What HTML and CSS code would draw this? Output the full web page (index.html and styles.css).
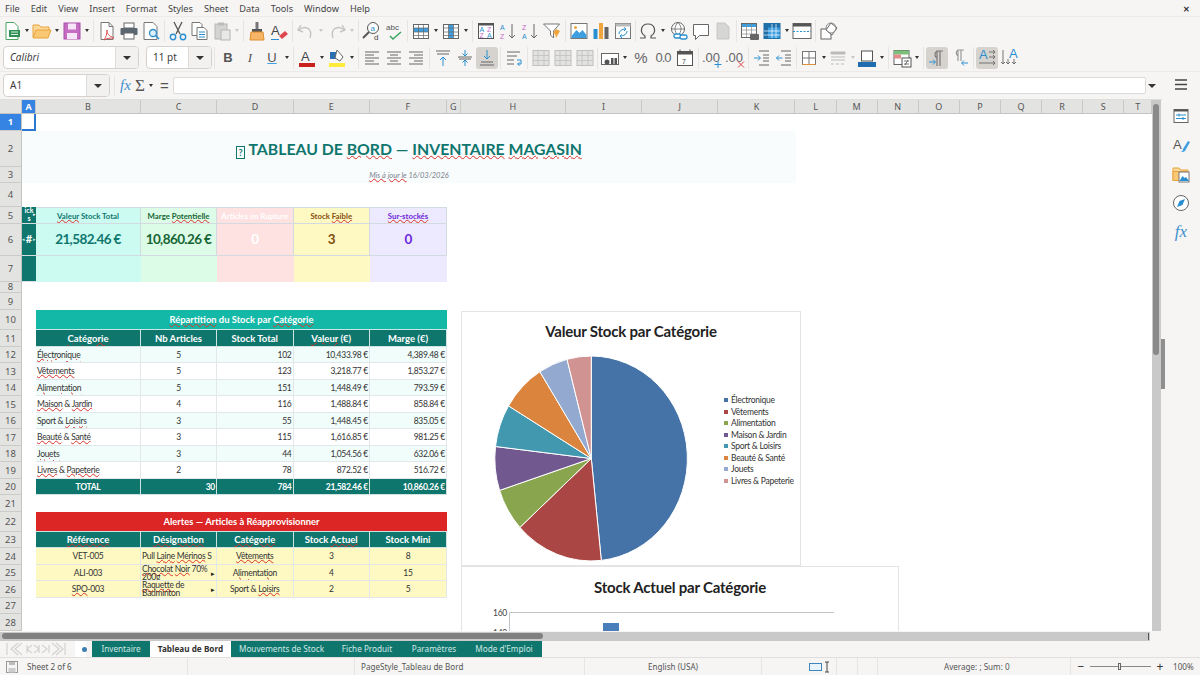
FILE: index.html
```html
<!DOCTYPE html>
<html lang="en">
<head>
    <meta charset="UTF-8">
    <title>Tableau de Bord - LibreOffice Calc</title>
    <link rel="stylesheet" href="styles.css">
</head>
<body>
<div class="app">
    <div class="menubar">
        <span>File</span><span>Edit</span><span>View</span><span>Insert</span><span>Format</span><span>Styles</span><span>Sheet</span><span>Data</span><span>Tools</span><span>Window</span><span>Help</span>
        <span class="close">&#10005;</span>
    </div>

    <!-- standard toolbar -->
    <div class="toolbar">
        <i class="btn"><svg viewBox="0 0 22 22"><path d="M5 2.5h8l4 4v13H5z" fill="#fff" stroke="#4aa564"/><rect x="8" y="10" width="11" height="7" fill="#2f8f55"/><path d="M10 12h7M10 14.5h7" stroke="#d8f0df"/></svg></i><i class="drop"></i>
        <i class="btn"><svg viewBox="0 0 22 22"><path d="M2 17V5h6l2 2h8v3" fill="#fbd898" stroke="#e8a33d"/><path d="M2 18l3-8h15l-3 8z" fill="#f9c874" stroke="#e8a33d"/></svg></i><i class="drop"></i>
        <i class="btn"><svg viewBox="0 0 22 22"><rect x="3" y="3" width="16" height="16" fill="#c46cc4" stroke="#a94fa9"/><rect x="7" y="3.5" width="8" height="6" fill="#f7e6f7"/><rect x="6" y="13" width="10" height="6" fill="#f7e6f7"/></svg></i><i class="drop"></i>
        <i class="sep"></i>
        <i class="btn"><svg viewBox="0 0 22 22"><path d="M5 2.5h8l4 4v13H5z" fill="#fff" stroke="#777"/><path d="M13 2.5v4h4" fill="none" stroke="#777"/><path d="M11 10c0 4 2 6 7 8-3 0-7 0-10 2 2-3 3-6 3-10z" fill="none" stroke="#d9534f"/></svg></i>
        <i class="btn"><svg viewBox="0 0 22 22"><rect x="6" y="3" width="10" height="5" fill="#fff" stroke="#666"/><rect x="2.5" y="8" width="17" height="7" rx="1" fill="#5b6770"/><rect x="6" y="13" width="10" height="6" fill="#fff" stroke="#666"/></svg></i>
        <i class="btn"><svg viewBox="0 0 22 22"><path d="M4 2.5h9l4 4v13H4z" fill="#fff" stroke="#777"/><circle cx="13" cy="13" r="3.5" fill="#dff0fa" stroke="#2a8fd0" stroke-width="1.3"/><path d="M15.5 15.5L19 19" stroke="#2a8fd0" stroke-width="1.6"/></svg></i>
        <i class="sep"></i>
        <i class="btn"><svg viewBox="0 0 22 22"><path d="M7 2l6 12M15 2L9 14" stroke="#555" stroke-width="1.3"/><circle cx="6" cy="17" r="2.7" fill="none" stroke="#2a8fd0" stroke-width="1.4"/><circle cx="16" cy="17" r="2.7" fill="none" stroke="#2a8fd0" stroke-width="1.4"/></svg></i>
        <i class="btn"><svg viewBox="0 0 22 22"><path d="M3 2.5h8l2 2v11H3z" fill="#fff" stroke="#777"/><path d="M8 7.5h7l3 3v9H8z" fill="#fff" stroke="#777"/><path d="M10 12h6M10 14.5h6M10 17h6" stroke="#2a8fd0"/></svg></i>
        <i class="btn"><svg viewBox="0 0 22 22"><rect x="4" y="4" width="12" height="15" fill="#d4d4d2" stroke="#b5b5b3"/><rect x="7" y="2.5" width="6" height="3" fill="#bbb"/><rect x="10" y="10" width="9" height="10" fill="#e8e8e6" stroke="#b5b5b3"/></svg></i><i class="drop off"></i>
        <i class="sep"></i>
        <i class="btn"><svg viewBox="0 0 22 22"><rect x="9.5" y="2" width="3" height="8" fill="#777"/><rect x="6" y="9" width="10" height="3" fill="#555"/><path d="M5 12h12l1 8H4z" fill="#f6b567" stroke="#e08e2d"/></svg></i>
        <i class="btn"><svg viewBox="0 0 22 22"><text x="3" y="15" class="ic-a" fill="#444">A</text><path d="M11 16l6-5 3 3-6 5z" fill="#e0474c"/><path d="M3 19.5h8" stroke="#2a8fd0"/></svg></i>
        <i class="sep"></i>
        <i class="btn"><svg viewBox="0 0 22 22"><path d="M6 5L3 10l5 2" fill="none" stroke="#c4c4c2" stroke-width="1.4"/><path d="M3.5 10C10 5 18 8 15 18" fill="none" stroke="#c4c4c2" stroke-width="1.4"/></svg></i><i class="drop off"></i>
        <i class="btn gap1"><svg viewBox="0 0 22 22"><path d="M16 5l3 5-5 2" fill="none" stroke="#c4c4c2" stroke-width="1.4"/><path d="M18.5 10C12 5 4 8 7 18" fill="none" stroke="#c4c4c2" stroke-width="1.4"/></svg></i><i class="drop off"></i>
        <i class="sep"></i>
        <i class="btn"><svg viewBox="0 0 22 22"><circle cx="12" cy="8" r="5.5" fill="#fff" stroke="#555"/><path d="M8 12l-6 6" stroke="#555" stroke-width="2"/><text x="9.5" y="10.5" class="ic-t" fill="#2a8fd0">a</text><text x="13" y="20" class="ic-t" fill="#444">d</text></svg></i>
        <i class="btn"><svg viewBox="0 0 22 22"><text x="3" y="10" class="ic-t" fill="#555">abc</text><path d="M7 16l3 3 8-7" fill="none" stroke="#3aa864" stroke-width="1.6"/></svg></i>
        <i class="sep"></i>
        <i class="btn"><svg viewBox="0 0 22 22"><rect x="3.5" y="4.5" width="15" height="14" fill="#fff" stroke="#666"/><rect x="4" y="8" width="14" height="4" fill="#3d9ee0"/><path d="M3.5 8h15M3.5 12h15M3.5 15.5h15M8.5 4.5v14M13.5 4.5v14" stroke="#666" stroke-width=".7"/></svg></i><i class="drop"></i>
        <i class="btn"><svg viewBox="0 0 22 22"><rect x="3.5" y="4.5" width="15" height="14" fill="#fff" stroke="#666"/><rect x="8.5" y="5" width="5" height="13" fill="#3d9ee0"/><path d="M3.5 8h15M3.5 12h15M3.5 15.5h15M8.5 4.5v14M13.5 4.5v14" stroke="#666" stroke-width=".7"/></svg></i><i class="drop"></i>
        <i class="sep"></i>
        <i class="btn"><svg viewBox="0 0 22 22"><rect x="3.5" y="3.5" width="15" height="15" fill="#fff" stroke="#555"/><rect x="3.5" y="3.5" width="15" height="2" fill="#555"/><text x="4.5" y="11.5" class="ic-s" fill="#2a8fd0">A</text><text x="12" y="11.5" class="ic-s" fill="#c966c9">Z</text><text x="4.5" y="17.5" class="ic-s" fill="#c966c9">Z</text><text x="12" y="17.5" class="ic-s" fill="#2a8fd0">A</text></svg></i>
        <i class="btn"><svg viewBox="0 0 22 22"><text x="3" y="10" class="ic-s" fill="#2a8fd0">A</text><text x="3" y="19" class="ic-s" fill="#c966c9">Z</text><path d="M15 4v14M12 15l3 3 3-3" fill="none" stroke="#666"/></svg></i>
        <i class="btn"><svg viewBox="0 0 22 22"><text x="3" y="10" class="ic-s" fill="#c966c9">Z</text><text x="3" y="19" class="ic-s" fill="#2a8fd0">A</text><path d="M15 4v14M12 15l3 3 3-3" fill="none" stroke="#666"/></svg></i>
        <i class="btn"><svg viewBox="0 0 22 22"><path d="M2.5 4h16l-6 7v7l-3-3v-4z" fill="#fff" stroke="#777"/><path d="M15 9l4 2-4 7-1-4-2-1z" fill="#f0a63c"/></svg></i>
        <i class="sep"></i>
        <i class="btn"><svg viewBox="0 0 22 22"><rect x="3" y="3.5" width="16" height="15" fill="#fff" stroke="#777"/><path d="M3.5 16l5-6 3 3 3-3 4 5v3h-15z" fill="#3d9ee0"/><circle cx="7.5" cy="7.5" r="1.5" fill="#f0a63c"/></svg></i>
        <i class="btn"><svg viewBox="0 0 22 22"><rect x="3.5" y="9" width="4" height="10" fill="#2a8fd0"/><rect x="9" y="3" width="4" height="16" fill="#f0a63c"/><rect x="14.5" y="7" width="4" height="12" fill="#666"/></svg></i>
        <i class="btn"><svg viewBox="0 0 22 22"><rect x="3.5" y="3.5" width="15" height="15" fill="#fff" stroke="#777"/><rect x="3.5" y="3.5" width="15" height="3" fill="#bbb"/><path d="M7 14c0-3 3-5 7-5M12 7.5l2 1.5-2 2M15 11c0 3-3 5-7 5M10 14.5l-2 1.5 2 2" fill="none" stroke="#2a8fd0"/></svg></i>
        <i class="sep n"></i>
        <i class="btn"><svg viewBox="0 0 22 22"><path d="M3 18h5v-2c-6-4-4-12 3-12s9 8 3 12v2h5" fill="none" stroke="#555" stroke-width="1.2"/></svg></i><i class="drop"></i>
        <i class="btn gap1"><svg viewBox="0 0 22 22"><circle cx="10" cy="9" r="6.5" fill="#fff" stroke="#666"/><path d="M3.5 9h13M10 2.5c-4 4-4 9 0 13M10 2.5c4 4 4 9 0 13" fill="none" stroke="#666" stroke-width=".8"/><rect x="6" y="14" width="7" height="4" rx="2" fill="#fff" stroke="#2a8fd0" stroke-width="1.3"/><rect x="12" y="15" width="7" height="4" rx="2" fill="#fff" stroke="#2a8fd0" stroke-width="1.3"/></svg></i>
        <i class="btn"><svg viewBox="0 0 22 22"><path d="M3.5 4.5h15v11h-9l-4 4v-4h-2z" fill="#fff" stroke="#666"/></svg></i>
        <i class="btn"><svg viewBox="0 0 22 22"><path d="M5 3h8l4 4v12H5z" fill="#d6d6d4" stroke="#c6c6c4"/></svg></i>
        <i class="sep"></i>
        <i class="btn"><svg viewBox="0 0 22 22"><rect x="2.5" y="3.5" width="15" height="14" fill="#fff" stroke="#666"/><rect x="3" y="4" width="14" height="3" fill="#3d9ee0"/><path d="M2.5 10h15M2.5 14h15M7.5 4v13M12.5 4v13" stroke="#888" stroke-width=".7"/><rect x="11" y="14" width="9" height="6" rx="1" fill="#666"/></svg></i>
        <i class="btn"><svg viewBox="0 0 22 22"><rect x="3" y="3.5" width="16" height="15" fill="#3d9ee0" stroke="#1e6ea8"/><rect x="3" y="3.5" width="4" height="15" fill="#1e6ea8"/><rect x="3" y="3.5" width="16" height="4" fill="#1e6ea8"/><path d="M3 11h16M3 15h16M11 4v14M15 4v14" stroke="#fff" stroke-width=".7"/></svg></i><i class="drop"></i>
        <i class="btn"><svg viewBox="0 0 22 22"><rect x="2" y="3.5" width="18" height="15" fill="#fff" stroke="#666"/><rect x="2" y="3.5" width="18" height="3" fill="#555"/><path d="M2 11.5h18" stroke="#2a8fd0" stroke-dasharray="2 1.5"/></svg></i>
        <i class="sep"></i>
        <i class="btn"><svg viewBox="0 0 22 22"><rect x="3" y="9" width="10" height="10" fill="#fff" stroke="#666"/><path d="M13 3l6 5-5 7-6-5z" fill="#fff" stroke="#666"/><circle cx="13" cy="8" r="5" fill="none" stroke="#888"/></svg></i>
    </div>

    <!-- formatting toolbar -->
    <div class="toolbar">
        <div class="combo font"><span class="val">Calibri</span><b class="arrow"></b></div>
        <div class="combo size"><span class="val upright">11 pt</span><b class="arrow"></b></div>
        <i class="sep"></i>
        <i class="btn t-b">B</i><i class="btn t-i">I</i><i class="btn t-u">U</i><i class="drop"></i>
        <i class="sep"></i>
        <i class="btn"><svg viewBox="0 0 22 22"><text x="5" y="14" class="ic-a" fill="#444">A</text><rect x="3" y="16" width="16" height="4" fill="#c9211e"/></svg></i><i class="drop"></i>
        <i class="btn"><svg viewBox="0 0 22 22"><rect x="4" y="5" width="6" height="7" fill="#2a6fb0"/><path d="M11 3l6 7-3 4-5-3z" fill="#fff" stroke="#666"/><rect x="3" y="16" width="16" height="4" fill="#ffeb3b"/></svg></i><i class="drop"></i>
        <i class="sep"></i>
        <i class="btn"><svg viewBox="0 0 22 22"><path d="M4 5h14M4 8h9M4 11h14M4 14h9M4 17h14" stroke="#666"/></svg></i>
        <i class="btn"><svg viewBox="0 0 22 22"><path d="M4 5h14M7 8h8M4 11h14M7 14h8M4 17h14" stroke="#666"/></svg></i>
        <i class="btn"><svg viewBox="0 0 22 22"><path d="M4 5h14M9 8h9M4 11h14M9 14h9M4 17h14" stroke="#666"/></svg></i>
        <i class="sep"></i>
        <i class="btn"><svg viewBox="0 0 22 22"><path d="M4 4h14M5 7h12" stroke="#666"/><path d="M11 10v9M8 13l3-3 3 3" fill="none" stroke="#2a8fd0"/></svg></i>
        <i class="btn"><svg viewBox="0 0 22 22"><path d="M4 10h14M5 12h12" stroke="#666"/><path d="M11 3v6M8.5 6.5L11 9l2.5-2.5M11 19v-6M8.5 15.5L11 13l2.5 2.5" fill="none" stroke="#2a8fd0"/></svg></i>
        <i class="btn on"><svg viewBox="0 0 22 22"><path d="M5 15h12M4 18h14" stroke="#666"/><path d="M11 3v9M8 9l3 3 3-3" fill="none" stroke="#2a8fd0"/></svg></i>
        <i class="sep"></i>
        <i class="btn"><svg viewBox="0 0 22 22"><path d="M4 5h13M4 9h10M4 13h7M4 17h7" stroke="#666"/><path d="M14 13h4v4h-3M16.5 15.5L14.5 17l2 1.5" fill="none" stroke="#2a8fd0"/></svg></i>
        <i class="sep"></i>
        <i class="btn"><svg viewBox="0 0 22 22"><use href="#merge"/></svg></i><i class="btn"><svg viewBox="0 0 22 22"><use href="#merge"/></svg></i><i class="btn"><svg viewBox="0 0 22 22"><use href="#merge"/></svg></i>
        <i class="sep n"></i>
        <i class="btn"><svg viewBox="0 0 22 22"><rect x="2.5" y="6.5" width="17" height="11" fill="#fff" stroke="#666"/><circle cx="8" cy="15" r="2.5" fill="#555"/><rect x="12" y="11" width="2.5" height="6" fill="#555"/><rect x="15.5" y="11" width="2.5" height="6" fill="#555"/></svg></i><i class="drop"></i>
        <i class="btn gap1 t-p">%</i>
        <i class="btn t-n">0.0</i>
        <i class="btn"><svg viewBox="0 0 22 22"><rect x="3.5" y="4.5" width="15" height="14" fill="#fff" stroke="#555"/><rect x="3.5" y="4.5" width="15" height="3" fill="#555"/><path d="M6 2.5v3M16 2.5v3" stroke="#555"/><text x="8" y="16.5" class="ic-s" fill="#444">7</text></svg></i>
        <i class="sep"></i>
        <i class="btn"><svg viewBox="0 0 22 22"><text x="1" y="15" class="ic-a" fill="#666">.00</text><path d="M17 14v7M13.5 17.5h7" stroke="#2a8fd0"/></svg></i>
        <i class="btn gap1"><svg viewBox="0 0 22 22"><text x="1" y="15" class="ic-a" fill="#666">.00</text><path d="M14 14.5l6 6M20 14.5l-6 6" stroke="#e0474c"/></svg></i>
        <i class="sep"></i>
        <i class="btn"><svg viewBox="0 0 22 22"><path d="M8 4h10M12 8h6M12 11h6M12 14h6M8 18h10" stroke="#666"/><path d="M3 11h6M7 8.5l2.5 2.5L7 13.5" fill="none" stroke="#2a8fd0"/></svg></i>
        <i class="btn"><svg viewBox="0 0 22 22"><path d="M8 4h10M12 8h6M12 11h6M12 14h6M8 18h10" stroke="#666"/><path d="M9.5 11h-6M6 8.5L3.5 11 6 13.5" fill="none" stroke="#2a8fd0"/></svg></i>
        <i class="sep n"></i>
        <i class="btn"><svg viewBox="0 0 22 22"><rect x="4.5" y="4.5" width="13" height="13" fill="#fff" stroke="#777"/><path d="M11 4.5v13M4.5 11h13" stroke="#777"/><path d="M4.5 17.5h13" stroke="#e0913a"/></svg></i><i class="drop"></i>
        <i class="btn neg"><svg viewBox="0 0 22 22"><path d="M4 5h14v2H4zM4 10h14M4 13h14M4 17h3M9 17h3M14 17h3" fill="#bbb" stroke="#bbb"/></svg></i><i class="drop off"></i>
        <i class="btn neg"><svg viewBox="0 0 22 22"><rect x="5.5" y="4" width="11" height="10" fill="#fff" stroke="#555"/><rect x="2" y="15" width="18" height="5" fill="#1f6cb0"/></svg></i><i class="drop"></i>
        <i class="sep"></i>
        <i class="btn"><svg viewBox="0 0 22 22"><rect x="3" y="3.5" width="15" height="14" fill="#fff" stroke="#666"/><rect x="3" y="3.5" width="15" height="4" fill="#7bbf7b"/><rect x="3" y="7.5" width="7" height="4" fill="#e58a8a"/><rect x="11" y="11" width="9" height="9" fill="#fff" stroke="#555"/><path d="M13 14h5M13 17h5M17 13l-3 5" stroke="#555" stroke-width=".8"/></svg></i><i class="drop"></i>
        <i class="sep"></i>
        <i class="btn on"><svg viewBox="0 0 22 22"><path d="M11 19V4h6M14 4v15M11 11a4 4 0 0 1 0-7" fill="none" stroke="#777" stroke-width="1.2"/><path d="M3 15h6M7 12.5L9.5 15 7 17.5" fill="none" stroke="#2a8fd0"/></svg></i>
        <i class="btn gap1"><svg viewBox="0 0 22 22"><path d="M9 14V3h6M12 3v11M9 9a3.5 3.5 0 0 1 0-6" fill="none" stroke="#999" stroke-width="1.2"/><path d="M19 16h-6M15 13.5L12.5 16l2.5 2.5" fill="none" stroke="#2a8fd0"/></svg></i>
        <i class="sep"></i>
        <i class="btn on"><svg viewBox="0 0 22 22"><text x="3" y="12" class="ic-a" fill="#2a8fd0">A</text><path d="M13 5h6M17 3l2 2-2 2M13 10h6M17 8l2 2-2 2M3 16h16M17 14l2 2-2 2" fill="none" stroke="#666" stroke-width=".9"/></svg></i>
        <i class="btn"><svg viewBox="0 0 22 22"><text x="11" y="11" class="ic-a" fill="#2a8fd0">A</text><path d="M5 3v14M3 15l2 2 2-2M10 12v5M8 15l2 2 2-2M16 12v5M14 15l2 2 2-2" fill="none" stroke="#666" stroke-width=".9"/></svg></i>
    </div>

    <!-- formula bar -->
    <div class="formulabar">
        <div class="combo name"><span class="val upright">A1</span><b class="arrow"></b></div>
        <i class="fxsep"></i>
        <span class="fx">fx</span>
        <span class="sigma">&Sigma;</span><i class="drop"></i>
        <span class="equals">=</span>
        <div class="input"></div>
        <b class="arrow small"></b>
    </div>

    <div class="workspace">
        <div class="sheetarea">
            <div class="sheet">
                <div class="colheads">
                    <span class="corner"></span>
                    <span class="ca sel">A</span><span class="cb">B</span><span class="cc">C</span><span class="cc">D</span><span class="cc">E</span><span class="cf">F</span><span class="cg">G</span><span class="ch">H</span><span class="cc">I</span><span class="cc">J</span><span class="ck">K</span><span class="cl">L</span><span class="cl">M</span><span class="cl">N</span><span class="cl">O</span><span class="cl">P</span><span class="cl">Q</span><span class="cl">R</span><span class="cl">S</span><span class="ct">T</span>
                </div>
                <div class="body">
                    <div class="rowheads">
                        <span class="sel">1</span><span>2</span><span>3</span><span>4</span><span>5</span><span>6</span><span>7</span><span>8</span><span>9</span><span>10</span><span>11</span><span>12</span><span>13</span><span>14</span><span>15</span><span>16</span><span>17</span><span>18</span><span>19</span><span>20</span><span>21</span><span>22</span><span>23</span><span>24</span><span>25</span><span>26</span><span>27</span><span>28</span>
                    </div>
                    <div class="cells">
                        <div class="cursor"></div>
                        <div class="title"><span><span class="tofu">?</span> TABLEAU DE <u>BORD</u> &mdash; <u>INVENTAIRE</u> <u>MAGASIN</u></span></div>
                        <div class="subtitle"><span><u>Mis à jour le</u> 16/03/2026</span></div>

                        <div class="kpis">
                            <div class="kpi-a ka1">ick<br>s<em>&#9656;</em></div>
                            <div class="kpi-l k1"><span><u>Valeur</u> Stock Total</span></div>
                            <div class="kpi-l k2"><span>Marge <u>Potentielle</u></span></div>
                            <div class="kpi-l k3"><span>Articles en Rupture</span></div>
                            <div class="kpi-l k4"><span>Stock <u>Faible</u></span></div>
                            <div class="kpi-l k5"><u>Sur-stockés</u></div>
                            <div class="kpi-a ka2"><em class="lt">&#9666;</em>#<em class="rt">&#9656;</em></div>
                            <div class="kpi-v k1">21,582.46 €</div>
                            <div class="kpi-v k2">10,860.26 €</div>
                            <div class="kpi-v k3">0</div>
                            <div class="kpi-v k4">3</div>
                            <div class="kpi-v k5">0</div>
                            <div class="kpi-a"></div>
                            <div class="kpi-e k1"></div>
                            <div class="kpi-e k2"></div>
                            <div class="kpi-e k3"></div>
                            <div class="kpi-e k4"></div>
                            <div class="kpi-e k5"></div>
                        </div>

                        <div class="tbl stock">
                            <div class="banner"><span><u>Répartition</u> du Stock par <u>Catégorie</u></span></div>
                            <div class="th"><u>Catégorie</u></div><div class="th">Nb Articles</div><div class="th">Stock Total</div><div class="th"><span><u>Valeur</u> (€)</span></div><div class="th">Marge (€)</div>
                            <div class="td alt l"><u>Électronique</u></div><div class="td alt c">5</div><div class="td alt r">102</div><div class="td alt r">10,433.98 €</div><div class="td alt r">4,389.48 €</div>
                            <div class="td l"><u>Vêtements</u></div><div class="td c">5</div><div class="td r">123</div><div class="td r">3,218.77 €</div><div class="td r">1,853.27 €</div>
                            <div class="td alt l"><u>Alimentation</u></div><div class="td alt c">5</div><div class="td alt r">151</div><div class="td alt r">1,448.49 €</div><div class="td alt r">793.59 €</div>
                            <div class="td l"><span><u>Maison</u> &amp; <u>Jardin</u></span></div><div class="td c">4</div><div class="td r">116</div><div class="td r">1,488.84 €</div><div class="td r">858.84 €</div>
                            <div class="td alt l"><span>Sport &amp; <u>Loisirs</u></span></div><div class="td alt c">3</div><div class="td alt r">55</div><div class="td alt r">1,448.45 €</div><div class="td alt r">835.05 €</div>
                            <div class="td l"><span><u>Beauté</u> &amp; <u>Santé</u></span></div><div class="td c">3</div><div class="td r">115</div><div class="td r">1,616.85 €</div><div class="td r">981.25 €</div>
                            <div class="td alt l"><u>Jouets</u></div><div class="td alt c">3</div><div class="td alt r">44</div><div class="td alt r">1,054.56 €</div><div class="td alt r">632.06 €</div>
                            <div class="td l"><span><u>Livres</u> &amp; <u>Papeterie</u></span></div><div class="td c">2</div><div class="td r">78</div><div class="td r">872.52 €</div><div class="td r">516.72 €</div>
                            <div class="tt c">TOTAL</div><div class="tt r">30</div><div class="tt r">784</div><div class="tt r">21,582.46 €</div><div class="tt r">10,860.26 €</div>
                        </div>

                        <div class="tbl alerts">
                            <div class="banner red">Alertes &mdash; Articles à Réapprovisionner</div>
                            <div class="th"><u>Référence</u></div><div class="th"><u>Désignation</u></div><div class="th"><u>Catégorie</u></div><div class="th"><span>Stock <u>Actuel</u></span></div><div class="th">Stock Mini</div>
                            <div class="td warn c">VET-005</div><div class="td warn l"><span>Pull <u>Laine</u> <u>Mérinos</u> S</span></div><div class="td warn c"><u>Vêtements</u></div><div class="td warn c">3</div><div class="td warn c">8</div>
                            <div class="td warn c">ALI-003</div><div class="td warn wrap"><u>Chocolat</u> <u>Noir</u> 70% 200g<em>&#9656;</em></div><div class="td warn c"><u>Alimentation</u></div><div class="td warn c">4</div><div class="td warn c">15</div>
                            <div class="td warn c"><span><u>SPO</u>-003</span></div><div class="td warn wrap"><u>Raquette</u> de Badminton<em>&#9656;</em></div><div class="td warn c"><span>Sport &amp; <u>Loisirs</u></span></div><div class="td warn c">2</div><div class="td warn c">5</div>
                        </div>

                        <!-- embedded chart objects, placed on the sheet -->
                        <svg class="chart pie" viewBox="461 311 340 255">
                            <text x="631" y="337" class="ch-title" text-anchor="middle">Valeur Stock par Catégorie</text>
                            <g stroke="#fff" stroke-width="1">
                                <path d="M591.3 458.5V356A96.5 102.5 0 0 1 601.3 560.4Z" fill="#4572a7"/>
                                <path d="M591.3 458.5L601.3 560.4A96.5 102.5 0 0 1 519.9 527.4Z" fill="#aa4643"/>
                                <path d="M591.3 458.5L519.9 527.4A96.5 102.5 0 0 1 499.6 490.4Z" fill="#89a54e"/>
                                <path d="M591.3 458.5L499.6 490.4A96.5 102.5 0 0 1 495.5 446.5Z" fill="#71588f"/>
                                <path d="M591.3 458.5L495.5 446.5A96.5 102.5 0 0 1 508.5 405.9Z" fill="#4198af"/>
                                <path d="M591.3 458.5L508.5 405.9A96.5 102.5 0 0 1 539.9 371.7Z" fill="#db843d"/>
                                <path d="M591.3 458.5L539.9 371.7A96.5 102.5 0 0 1 567 359.3Z" fill="#93a9cf"/>
                                <path d="M591.3 458.5L567 359.3A96.5 102.5 0 0 1 591.3 356Z" fill="#d19392"/>
                            </g>
                            <g class="legend">
                                <rect x="724" y="398" width="4" height="4" fill="#4572a7"/><text x="731" y="403">Électronique</text>
                                <rect x="724" y="410" width="4" height="4" fill="#aa4643"/><text x="731" y="415">Vêtements</text>
                                <rect x="724" y="421" width="4" height="4" fill="#89a54e"/><text x="731" y="426">Alimentation</text>
                                <rect x="724" y="433" width="4" height="4" fill="#71588f"/><text x="731" y="438">Maison &amp; Jardin</text>
                                <rect x="724" y="444" width="4" height="4" fill="#4198af"/><text x="731" y="449">Sport &amp; Loisirs</text>
                                <rect x="724" y="456" width="4" height="4" fill="#db843d"/><text x="731" y="461">Beauté &amp; Santé</text>
                                <rect x="724" y="467" width="4" height="4" fill="#93a9cf"/><text x="731" y="472">Jouets</text>
                                <rect x="724" y="479" width="4" height="4" fill="#d19392"/><text x="731" y="484">Livres &amp; Papeterie</text>
                            </g>
                        </svg>
                        <svg class="chart bars" viewBox="461 566 438 66">
                            <text x="680" y="592.5" class="ch-title" text-anchor="middle">Stock Actuel par Catégorie</text>
                            <text x="507" y="615.5" class="ch-axis" text-anchor="end">160</text>
                            <text x="507" y="636" class="ch-axis" text-anchor="end">140</text>
                            <path d="M509.5 640V612.5H834" fill="none" stroke="#c4c4c4"/>
                            <rect x="603" y="623" width="16" height="20" fill="#4a7ebb"/>
                        </svg>
                    </div>
                </div>
            </div>
            <div class="vscroll"><i></i></div>
        </div>
        <div class="grip"></div>
        <div class="sidebar">
            <svg viewBox="0 0 22 22"><path d="M5 6h12M5 10.5h12M5 15h12" stroke="#444" stroke-width="1.5"/></svg>
            <svg viewBox="0 0 22 22"><rect x="4" y="4.5" width="14" height="13" fill="#fff" stroke="#666"/><rect x="4" y="4.5" width="14" height="2" fill="#555"/><path d="M6 10h10M6 13.5h10" stroke="#2a8fd0"/><path d="M9 8.5v3M13 12v3" stroke="#2a8fd0"/></svg>
            <svg viewBox="0 0 22 22"><text x="3" y="15" class="ic-a" fill="#555">A</text><path d="M10 18c2 0 3-1 3-3l5-8 2 1-5 9c-1 1-3 1-5 1z" fill="#3d9ee0"/></svg>
            <svg viewBox="0 0 22 22"><path d="M3 17V5h6l2 2h7v2" fill="#fbd898" stroke="#e8a33d"/><rect x="3" y="8.5" width="14" height="9" fill="#f9c874" stroke="#e8a33d"/><rect x="9" y="9" width="10" height="10" fill="#fff" stroke="#777"/><path d="M9.5 18l3-5 2 2 1.5-1 3 4z" fill="#2a8fd0"/></svg>
            <svg viewBox="0 0 22 22"><circle cx="11" cy="11" r="7.5" fill="#fff" stroke="#666"/><path d="M15 7l-2.5 6L7 15l2.5-6z" fill="#2a8fd0"/></svg>
            <span class="fx side">fx</span>
        </div>
    </div>

    <div class="hscroll"><i></i><b></b></div>

    <div class="tabbar">
        <div class="tabnav">
            <svg viewBox="0 0 62 16"><g fill="none" stroke="#d4d4d2" stroke-width="1.3"><path d="M2 2v12M13 2L6 8l7 6M17 2l-7 6 7 6"/><path d="M27 4l-5 4 5 4M22 4v8M34 4v8M29 4l5 4-5 4M37 4l5 4-5 4M44 4v8"/><path d="M47 2l7 6-7 6M51 2l7 6-7 6M60 2v12"/></g></svg>
        </div>
        <div class="newtab"><i></i></div>
        <span class="tab">Inventaire</span>
        <span class="tab active">Tableau de Bord</span>
        <span class="tab t3">Mouvements de Stock</span>
        <span class="tab t4">Fiche Produit</span>
        <span class="tab t5">Paramètres</span>
        <span class="tab t6">Mode d'Emploi</span>
    </div>

    <div class="statusbar">
        <span class="st st1"><svg viewBox="0 0 14 14"><rect x="1.5" y="1.5" width="11" height="11" fill="none" stroke="#999"/><rect x="4" y="2" width="6" height="3" fill="#bbb"/><rect x="3.5" y="8" width="7" height="4.5" fill="#ccc"/></svg>Sheet 2 of 6</span>
        <span class="st st2"></span>
        <span class="st st3">PageStyle_Tableau de Bord</span>
        <span class="st st4">English (USA)</span>
        <span class="st st5"><svg viewBox="0 0 22 12"><rect x=".5" y="2.5" width="12" height="7" fill="#e8f3fa" stroke="#3d86bd"/><path d="M16 1h4M18 1v10M16 11h4" stroke="#444" fill="none"/></svg></span>
        <span class="st st6"></span>
        <span class="st st7"></span>
        <span class="st st8">Average: ; Sum: 0</span>
        <span class="zoom"><b>&minus;</b><i><em></em></i><b>+</b></span>
        <span class="pct">100%</span>
    </div>
</div>

<svg class="defs" width="0" height="0">
    <symbol id="merge" viewBox="0 0 22 22"><rect x="3" y="3.5" width="16" height="15" fill="#e2e2e0" stroke="#c0c0be"/><path d="M3 8.5h16M3 13.5h16M8 3.5v15M14 3.5v15" stroke="#c0c0be" stroke-width=".8"/></symbol>
</svg>
</body>
</html>
```
FILE: styles.css
```css
* {
    box-sizing: border-box;
}
html, body {
    margin: 0;
    padding: 0;
    height: 100%;
    overflow: hidden;
}
body {
    background: #f6f5f4;
    font-family: "Noto Sans", sans-serif;
    font-size: 10px;
    color: #3d3d3d;
}
i, em, b {
    font-style: normal;
    font-weight: normal;
}
.defs {
    position: absolute;
}
.app {
    width: 1200px;
    height: 675px;
    display: flex;
    flex-direction: column;
}

/* menu */
.menubar {
    height: 17px;
    display: flex;
    align-items: center;
    gap: 11px;
    padding: 0 5px;
    font-size: 9.2px;
    color: #444;
    border-bottom: 1px solid #ecebe9;
}
.menubar .close {
    margin-left: auto;
    margin-right: 5px;
    font-size: 8px;
    color: #333;
    font-weight: bold;
}

/* toolbars */
.toolbar {
    height: 27px;
    display: flex;
    align-items: center;
    padding-left: 1px;
}
.toolbar + .toolbar {
    padding-left: 3px;
    height: 28px;
    border-bottom: 1px solid #ebeae8;
}
.btn {
    width: 22px;
    height: 22px;
    flex: none;
    display: flex;
    align-items: center;
    justify-content: center;
    border-radius: 3px;
    color: #555;
}
.btn svg {
    width: 22px;
    height: 22px;
    display: block;
}
.btn.on {
    background: #d6d3cf;
}
.gap1 {
    margin-left: 1px;
}
.neg {
    margin-left: -1px;
}
.drop {
    width: 8px;
    flex: none;
    height: 22px;
    display: flex;
    align-items: center;
    justify-content: center;
}
.drop::after {
    content: "";
    border-left: 2.5px solid transparent;
    border-right: 2.5px solid transparent;
    border-top: 3px solid #333;
}
.drop.off::after {
    border-top-color: #c8c8c6;
}
.sep {
    width: 5px;
    height: 22px;
    flex: none;
    position: relative;
}
.sep::after {
    content: "";
    position: absolute;
    left: 2px;
    top: 0;
    bottom: 0;
    width: 1px;
    background: #e6e5e3;
}
.sep.n {
    width: 3px;
}
.sep.n::after {
    left: 1px;
}
.t-b {
    font: bold 13px "Liberation Sans", sans-serif;
}
.t-i {
    font: italic 13px "Liberation Serif", serif;
}
.t-u {
    font: 13px "Liberation Sans", sans-serif;
    text-decoration: underline;
    text-decoration-color: #3d9ee0;
}
.t-p {
    font: 15px "Liberation Sans", sans-serif;
    color: #666;
}
.t-n {
    font: 13px "Liberation Sans", sans-serif;
    letter-spacing: -1px;
    color: #666;
}
.ic-a {
    font: 13px "Liberation Sans", sans-serif;
}
.ic-t {
    font: 8px "Liberation Sans", sans-serif;
}
.ic-s {
    font: 7px "Liberation Sans", sans-serif;
}

/* combo boxes */
.combo {
    height: 23px;
    display: flex;
    background: #fff;
    border: 1px solid #d5d2ce;
    border-radius: 4px;
    overflow: hidden;
    flex: none;
    font-size: 10px;
}
.combo .val {
    flex: 1;
    padding-left: 6px;
    line-height: 21px;
    font-style: italic;
}
.combo .val.upright {
    font-style: normal;
}
.combo .arrow {
    width: 23px;
    background: #f2f1ef;
    border-left: 1px solid #dedbd8;
    position: relative;
}
.arrow::after {
    content: "";
    position: absolute;
    left: 50%;
    top: 50%;
    margin: -2px 0 0 -4px;
    border-left: 4px solid transparent;
    border-right: 4px solid transparent;
    border-top: 4px solid #333;
}
.combo.font {
    width: 136px;
}
.combo.size {
    width: 66px;
    margin-left: 7px;
}
.combo.name {
    width: 107px;
}

/* formula bar */
.formulabar {
    height: 28px;
    display: flex;
    align-items: center;
    padding: 0 0 0 3px;
    border-bottom: 1px solid #dededc;
    width: 1162px;
}
.fxsep {
    width: 1px;
    height: 20px;
    background: #e6e5e3;
    margin: 0 5px 0 4px;
}
.fx {
    font: italic 15px "Liberation Serif", serif;
    color: #3d8fce;
    width: 15px;
}
.sigma {
    font: 17px "Liberation Serif", serif;
    color: #555;
    width: 12px;
}
.equals {
    font: 15px "Liberation Sans", sans-serif;
    color: #555;
    margin-left: 5px;
    width: 9px;
}
.input {
    margin-left: 4px;
    width: 973px;
    height: 17px;
    background: #fff;
    border: 1px solid #dcdbd9;
    border-radius: 2px;
}
.arrow.small {
    position: relative;
    width: 12px;
    height: 10px;
}

/* sheet */
.workspace {
    height: 531px;
    display: flex;
}
.sheetarea {
    width: 1161px;
    display: flex;
}
.sheet {
    width: 1152px;
    overflow: hidden;
    background: #fff;
}
.colheads {
    height: 14px;
    display: flex;
    background: #e3e3e1;
    border-bottom: 1px solid #c4c4c2;
}
.colheads span {
    flex: none;
    border-right: 1px solid #c9c9c7;
    text-align: center;
    font-size: 9px;
    line-height: 13px;
    color: #555;
}
.colheads .corner {
    width: 22px;
}
.ca { width: 14px; }
.cb { width: 105px; }
.cc { width: 76.3px; }
.cf { width: 77px; }
.cg { width: 14px; }
.ch { width: 105px; }
.ck { width: 77px; }
.cl { width: 41.1px; }
.ct { width: 28px; }
.colheads .sel {
    background: #3584e4;
    color: #fff;
    font-weight: bold;
}
.body {
    display: flex;
    height: 517px;
}
.rowheads {
    width: 22px;
    flex: none;
    display: grid;
    grid-template-rows: 16.5px 36.2px 16.6px 24px 17px 31.4px 26px 11.6px 16.7px 20.3px repeat(11, 16.5px) 20px repeat(6, 16.5px);
    background: #e3e3e1;
}
.rowheads span {
    border-bottom: 1px solid #cbcbc9;
    border-right: 1px solid #c4c4c2;
    display: flex;
    align-items: center;
    justify-content: center;
    font-size: 9.5px;
    color: #555;
}
.rowheads .sel {
    background: #3584e4;
    color: #fff;
    font-weight: bold;
}
.cells {
    position: relative;
    flex: 1;
    display: grid;
    grid-template-columns: 14px 105px 76px 76.5px 76.5px 77px 14px 105px 76px 77px 77px 1fr;
    grid-template-rows: 16.5px 36.2px 16.6px 24px 17px 31.4px 26px 11.6px 16.7px 20.3px repeat(11, 16.5px) 20px repeat(6, 16.5px);
    font-family: Lato, "Noto Sans", sans-serif;
    color: #222;
}
.cells u {
    text-decoration: underline wavy #d9342b 1px;
    text-underline-offset: 0;
}
.cursor {
    grid-column: 1;
    grid-row: 1;
    border: 1px solid #2a78d0;
    border-width: 0 2px 2px 0;
}
.title, .subtitle {
    grid-column: 1 / 12;
    background: #f8fcfd;
    display: flex;
    justify-content: center;
    align-items: center;
}
.title {
    grid-row: 2;
    font-size: 15.8px;
    font-weight: bold;
    color: #0f766e;
}
.tofu {
    display: inline-block;
    width: 9px;
    height: 13px;
    border: 1px solid #0f766e;
    font-size: 9px;
    line-height: 11px;
    text-align: center;
    vertical-align: -1px;
}
.subtitle {
    grid-row: 3;
    padding-top: 1px;
    font-size: 7.5px;
    font-style: italic;
    color: #78828c;
}

/* kpi cards */
.kpis {
    grid-column: 1 / 7;
    grid-row: 5 / 8;
    display: grid;
    grid-template-columns: 14px 105px 76px 76.5px 76.5px 77px;
    grid-template-rows: 17px 31.4px 26px;
    text-align: center;
}
.kpi-a {
    background: #0f766e;
    color: #fff;
    font-weight: bold;
    font-size: 7px;
    line-height: 7.5px;
    overflow: hidden;
    position: relative;
    border-bottom: 1px solid #d8dfe0;
    white-space: nowrap;
}
.kpi-a em {
    position: absolute;
    right: 0;
    top: 4px;
    font-size: 5px;
}
.kpi-a.ka2 {
    font-size: 11px;
    line-height: 30px;
}
.kpi-a.ka2 em {
    top: 0;
    color: #cfe6e3;
}
.kpi-a.ka2 .lt {
    left: 0;
    right: auto;
}
.kpi-l, .kpi-v {
    border-right: 1px solid #d4dbe0;
    border-bottom: 1px solid #d4dbe0;
    display: flex;
    align-items: center;
    justify-content: center;
    white-space: nowrap;
    overflow: hidden;
}
.kpi-l {
    font-size: 7.8px;
    font-weight: bold;
    border-top: 1px solid #d4dbe0;
}
.kpi-v {
    font-size: 13.5px;
    letter-spacing: -0.6px;
    font-weight: bold;
}
.k1 { background: #ccfbf1; color: #0f766e; }
.k2 { background: #dcfce7; color: #166534; }
.k3 { background: #fee2e2; color: #fff; }
.k4 { background: #fef9c3; color: #854d0e; }
.k5 { background: #ede9fe; color: #6d28d9; }

/* tables */
.tbl {
    grid-column: 2 / 7;
    display: grid;
    grid-template-columns: 105px 76px 76.5px 76.5px 77px;
    grid-auto-rows: 16.5px;
    font-size: 8.5px;
    letter-spacing: -0.3px;
}
.stock {
    grid-row: 10 / 21;
    grid-template-rows: 20.3px;
}
.alerts {
    grid-row: 22 / 27;
    grid-template-rows: 20px;
}
.banner {
    grid-column: 1 / -1;
    background: #14b8a6;
    color: #fff;
    font-size: 9.4px;
    letter-spacing: 0;
    font-weight: bold;
    display: flex;
    align-items: center;
    justify-content: center;
    border-bottom: 1px solid #c9e8e4;
}
.banner.red {
    background: #dc2626;
}
.th, .tt {
    background: #0f766e;
    color: #fff;
    font-weight: bold;
    display: flex;
    align-items: center;
    justify-content: center;
    border-right: 1px solid #cfe3e1;
    border-bottom: 1px solid #cfe3e1;
    white-space: nowrap;
}
.th {
    font-size: 9.5px;
    letter-spacing: 0;
}
.tt {
    letter-spacing: -0.3px;
}
.tt.r {
    justify-content: flex-end;
    padding-right: 1px;
}
.td {
    display: flex;
    align-items: center;
    background: #fff;
    border-right: 1px solid #e2e8ea;
    border-bottom: 1px solid #e2e8ea;
    white-space: nowrap;
    overflow: hidden;
    color: #333;
}
.td.alt {
    background: #f0fdfa;
}
.td.warn {
    background: #fef9c3;
}
.l {
    padding-left: 1px;
}
.c {
    justify-content: center;
}
.r {
    justify-content: flex-end;
    padding-right: 1px;
}
.td.wrap {
    display: block;
    white-space: normal;
    line-height: 8px;
    padding: 0 7px 0 1px;
    position: relative;
}
.td.wrap em {
    position: absolute;
    right: 1px;
    top: 4px;
    font-size: 7px;
    color: #222;
}

/* charts */
.chart {
    position: absolute;
    background: #fff;
    overflow: hidden;
    outline: 1px solid #e4e4e4;
    outline-offset: -1px;
}
.pie {
    left: 439px;
    top: 197px;
    width: 340px;
    height: 255px;
}
.bars {
    left: 439px;
    top: 452px;
    width: 438px;
    height: 66px;
}
.ch-title {
    font: bold 15px Lato, sans-serif;
    letter-spacing: -0.2px;
    fill: #222;
}
.legend text {
    font: 8.5px Lato, sans-serif;
    letter-spacing: -0.28px;
    fill: #333;
}
.ch-axis {
    font: 8.5px Lato, sans-serif;
    letter-spacing: -0.3px;
    fill: #444;
}

/* scrollbars */
.vscroll {
    width: 9px;
    background: #c9c9c9;
    padding: 4px 2px 0 1px;
}
.vscroll i {
    display: block;
    height: 251px;
    background: #8a8a8a;
    border-radius: 3px;
}
.grip {
    width: 5px;
    position: relative;
    flex: none;
}
.grip::after {
    content: "";
    position: absolute;
    left: 0;
    top: 239px;
    width: 4px;
    height: 50px;
    background: #8f8f8f;
}
.sidebar {
    flex: 1;
    display: flex;
    flex-direction: column;
    align-items: center;
    margin-top: -30px;
    gap: 7px;
    padding-top: 4px;
    padding-right: 4px;
}
.sidebar svg {
    width: 22px;
    height: 22px;
    flex: none;
}
.sidebar svg:first-child {
    margin-bottom: 2px;
}
.sidebar .fx.side {
    width: auto;
    font-size: 17px;
    line-height: 22px;
}
.hscroll {
    height: 9px;
    width: 1150px;
    background: #c9c9c9;
    padding: 1px 0 0 2px;
    margin-top: 1px;
    position: relative;
}
.hscroll i {
    display: block;
    width: 541px;
    height: 6px;
    border-radius: 3px;
    background: #808080;
}
.hscroll b {
    position: absolute;
    right: 1px;
    top: 1px;
    width: 1px;
    height: 7px;
    background: #555;
}

/* sheet tabs */
.tabbar {
    height: 17px;
    display: flex;
    align-items: stretch;
    font-size: 8.2px;
    border-bottom: 1px solid #e0dfdd;
}
.tabnav {
    width: 74px;
    padding: 0 0 0 5px;
}
.tabnav svg {
    width: 62px;
    height: 16px;
    display: block;
}
.newtab {
    width: 18px;
    position: relative;
    background: linear-gradient(90deg, #f6f5f4 0, #f6f5f4 1px, #fff 1px, #fff 12px, #f6f5f4 12px);
}
.newtab i {
    position: absolute;
    left: 8px;
    top: 6px;
    width: 5px;
    height: 5px;
    border-radius: 50%;
    background: #3d7fb0;
}
.tab {
    width: 58px;
    background: #0f766e;
    color: #cfe6e3;
    text-align: center;
    line-height: 15px;
    white-space: nowrap;
}
.tab.active {
    width: 81px;
    background: #fff;
    color: #333;
    font-weight: bold;
}
.t3 { width: 101px; }
.t4 { width: 70px; }
.t5 { width: 64px; }
.t6 { width: 76px; }

/* status bar */
.statusbar {
    flex: 1;
    display: flex;
    align-items: center;
    font-size: 8.1px;
    color: #555;
}
.st {
    height: 100%;
    display: flex;
    align-items: center;
    border-right: 1px solid #e6e5e3;
    white-space: nowrap;
    flex: none;
}
.st svg {
    width: 14px;
    height: 14px;
    margin: 0 8px 0 5px;
}
.st1 { width: 188px; }
.st2 { width: 167px; }
.st3 { width: 230px; padding-left: 6px; }
.st4 { width: 177px; padding-left: 63px; }
.st5 { width: 75px; padding-left: 47px; }
.st5 svg {
    width: 22px;
    height: 12px;
    margin: 0;
}
.st6 { width: 21px; }
.st7 { width: 20px; }
.st8 { width: 193px; padding-left: 66px; }
.zoom {
    display: flex;
    align-items: center;
    margin-left: 6px;
    width: 87px;
}
.zoom b {
    font-size: 12px;
    color: #333;
    width: 8px;
    text-align: center;
}
.zoom i {
    flex: 1;
    height: 1px;
    background: #888;
    margin: 0 5px;
    position: relative;
}
.zoom em {
    position: absolute;
    left: 28px;
    top: -3px;
    width: 3px;
    height: 7px;
    background: #eee;
    border: 1px solid #666;
}
.pct {
    margin-left: 9px;
}
```
